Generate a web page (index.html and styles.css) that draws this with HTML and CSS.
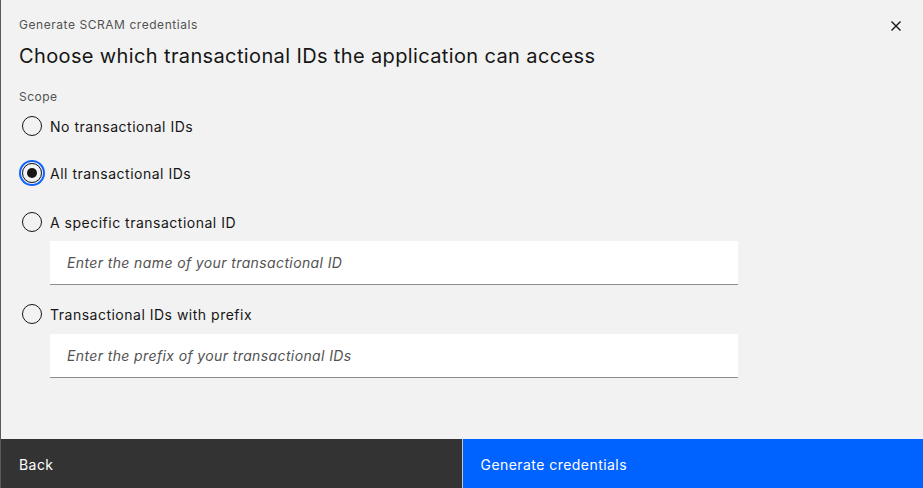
FILE: index.html
```html
<!DOCTYPE html>
<html>
<head>
<meta charset="utf-8">
<link rel="stylesheet" href="styles.css">
</head>
<body>
<div class="modal">
  <div class="header">
    <div class="label">Generate SCRAM credentials</div>
    <h2 class="heading">Choose which transactional IDs the application can access</h2>
    <button class="close" aria-label="Close">
      <svg width="16" height="16" viewBox="0 0 16 16"><path d="M3.5 3.5 L12.5 12.5 M12.5 3.5 L3.5 12.5" stroke="#161616" stroke-width="1.4" fill="none"/></svg>
    </button>
  </div>
  <div class="content">
    <div class="legend">Scope</div>
    <div class="options">
      <label class="radio r1"><span class="dot"></span><span class="rtext">No transactional IDs</span></label>
      <label class="radio r2 checked"><span class="dot"></span><span class="rtext">All transactional IDs</span></label>
      <label class="radio r3"><span class="dot"></span><span class="rtext">A specific transactional ID</span></label>
      <div class="field f1"><span class="ph">Enter the name of your transactional ID</span></div>
      <label class="radio r4"><span class="dot"></span><span class="rtext">Transactional IDs with prefix</span></label>
      <div class="field f2"><span class="ph">Enter the prefix of your transactional IDs</span></div>
    </div>
  </div>
  <div class="footer">
    <button class="btn secondary">Back</button>
    <button class="btn primary">Generate credentials</button>
  </div>
</div>
</body>
</html>
```
FILE: styles.css
```css
* { box-sizing: border-box; }
html, body { margin: 0; padding: 0; }
body {
  width: 923px;
  height: 488px;
  overflow: hidden;
  font-family: Inter, "Noto Sans", sans-serif;
  color: #161616;
  background: #f2f2f2;
}
.modal {
  height: 488px;
  display: flex;
  flex-direction: column;
  border-left: 1px solid #5a5a5a;
  background: #f2f2f2;
}
.header {
  position: relative;
  padding: 16px 18px 0 18px;
}
.label {
  font-size: 12px;
  line-height: 18px;
  color: #525252;
  letter-spacing: 0.55px;
}
.heading {
  margin: 8px 0 0 0;
  font-size: 20px;
  font-weight: 400;
  line-height: 28px;
  color: #161616;
  letter-spacing: 0.37px;
}
.close {
  position: absolute;
  top: 18px;
  right: 19px;
  width: 16px;
  height: 16px;
  padding: 0;
  border: 0;
  background: transparent;
  display: flex;
}
.content {
  flex: 1;
  padding: 19px 18px 0 18px;
}
.legend {
  font-size: 12px;
  line-height: 16px;
  color: #525252;
  letter-spacing: 0.5px;
}
.options {
  display: flex;
  flex-direction: column;
  margin-top: 10px;
}
.radio {
  display: flex;
  align-items: center;
  height: 22px;
  gap: 8px;
  font-size: 14px;
  color: #161616;
  letter-spacing: 0.5px;
}
.r2 { margin-top: 25px; }
.r3 { margin-top: 27px; }
.dot {
  width: 20px;
  height: 20px;
  border-radius: 50%;
  border: 1px solid #161616;
  margin-left: 3px;
  flex: none;
  position: relative;
}
.checked .dot {
  box-shadow: 0 0 0 1px #f2f2f2, 0 0 0 3px #0f62fe;
}
.checked .dot::after {
  content: "";
  position: absolute;
  left: 4px;
  top: 4px;
  width: 10px;
  height: 10px;
  border-radius: 50%;
  background: #161616;
}
.field {
  margin-left: 31px;
  width: 688px;
  height: 44px;
  background: #ffffff;
  border-bottom: 1px solid #8d8d8d;
  display: flex;
  align-items: center;
  padding-left: 17px;
}
.f1 { margin-top: 8px; }
.f2 { margin-top: 9px; }
.r4 { margin-top: 18px; }
.ph {
  font-size: 14px;
  font-style: italic;
  color: #525252;
  letter-spacing: 0.38px;
}
.footer {
  display: flex;
  height: 49px;
  gap: 1px;
  background: #c6c6c6;
  margin-left: -1px;
}
.btn {
  flex: 1;
  border: 0;
  margin: 0;
  font-family: inherit;
  font-size: 14px;
  line-height: 18px;
  letter-spacing: 0.45px;
  text-align: left;
  padding: 17px 16px 0 18px;
  display: flex;
  align-items: flex-start;
  color: #ffffff;
}
.secondary { background: #333333; border-left: 1px solid #5a5a5a; }
.primary { background: #0062ff; }
```
